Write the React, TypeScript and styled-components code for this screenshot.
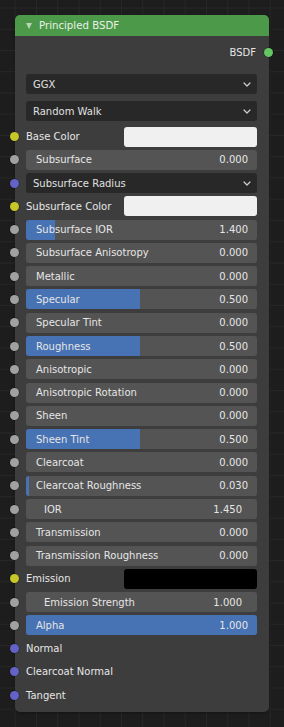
import React from "react";
import styled, { createGlobalStyle } from "styled-components";

const GlobalStyle = createGlobalStyle`
  html, body {
    margin: 0;
    padding: 0;
  }
  body {
    background-color: #1d1d1d;
    background-image:
      linear-gradient(to right, #272727 1px, transparent 1px),
      linear-gradient(to bottom, #272727 1px, transparent 1px);
    background-size: 21.25px 21.25px;
    background-position: 14.75px 7.5px;
    font-family: "DejaVu Sans", "Liberation Sans", sans-serif;
    color: #e6e6e6;
  }
`;

const Canvas = styled.div`
  min-height: 727px;
  padding: 15px 15px 0 15px;
  box-sizing: border-box;
`;

const Node = styled.div`
  width: 254px;
  border-radius: 5px;
  background: #3d3d3d;
  box-shadow: 0 1px 3px rgba(0, 0, 0, 0.35);
`;

const Header = styled.div`
  height: 21px;
  background: #4c9a49;
  border-radius: 5px 5px 0 0;
  display: flex;
  align-items: center;
  padding-left: 11px;
  gap: 7px;
  font-size: 10.2px;
  color: #e8f0e8;
`;

const Caret = styled.span`
  width: 0;
  height: 0;
  border-left: 3.5px solid transparent;
  border-right: 3.5px solid transparent;
  border-top: 6px solid #b8d4b6;
  margin-top: 1px;
`;

const Body = styled.div`
  padding: 6px 12px 6.5px 11px;
  display: flex;
  flex-direction: column;
`;

const OutputRow = styled.div`
  position: relative;
  height: 20px;
  display: flex;
  align-items: center;
  justify-content: flex-end;
  padding-right: 1px;
  font-size: 10px;
`;

const Socket = styled.span<{ $color: string; $side: "left" | "right" }>`
  position: absolute;
  top: 50%;
  ${(p) => (p.$side === "left" ? "left: -16px;" : "right: -16px;")}
  width: 9px;
  height: 9px;
  margin-top: -4.5px;
  border-radius: 50%;
  background: ${(p) => p.$color};
  box-shadow: 0 0 0 0.5px rgba(0, 0, 0, 0.45);
`;

const Dropdowns = styled.div`
  margin-top: 12px;
  display: flex;
  flex-direction: column;
  gap: 7px;
`;

const Dropdown = styled.div`
  position: relative;
  height: 20px;
  border-radius: 3px;
  background: #282828;
  display: flex;
  align-items: center;
  justify-content: space-between;
  padding: 0 6px 0 7px;
  font-size: 10px;
  color: #e0e0e0;
  flex: 1 0 auto;
  box-sizing: border-box;
`;

const Rows = styled.div`
  margin-top: 5.5px;
  display: flex;
  flex-direction: column;
  gap: 3.29px;
`;

const Row = styled.div`
  position: relative;
  height: 20px;
  display: flex;
  align-items: center;
  font-size: 10px;
`;

const Label = styled.span`
  color: #e6e6e6;
  white-space: nowrap;
`;

const ColorLabel = styled(Label)`
  width: 98px;
  flex: none;
`;

const Swatch = styled.div<{ $color: string }>`
  flex: 1;
  height: 20px;
  border-radius: 3px;
  background: ${(p) => p.$color};
`;

const Slider = styled.div<{ $number?: boolean }>`
  position: relative;
  flex: 1;
  height: 20px;
  border-radius: 3px;
  background: #545454;
  overflow: hidden;
  display: flex;
  align-items: center;
  justify-content: space-between;
  padding: ${(p) => (p.$number ? "0 15px 0 18px" : "0 9px 0 10px")};
  color: #e6e6e6;
`;

const Fill = styled.div`
  position: absolute;
  left: 0;
  top: 0;
  bottom: 0;
  background: #4772b3;
`;

const SliderText = styled.span`
  position: relative;
  white-space: nowrap;
`;

const Chevron = () => (
  <svg width="8" height="5" viewBox="0 0 8 5">
    <polyline
      points="1,1 4,4 7,1"
      fill="none"
      stroke="#d0d0d0"
      strokeWidth="1.2"
      strokeLinecap="round"
      strokeLinejoin="round"
    />
  </svg>
);

const YELLOW = "#c7c729";
const GREY = "#a1a1a1";
const PURPLE = "#6363c7";
const GREEN = "#63c763";

type Item =
  | { kind: "color"; label: string; color: string }
  | { kind: "slider"; label: string; value: string; fill: number }
  | { kind: "number"; label: string; value: string }
  | { kind: "menu"; label: string }
  | { kind: "vector"; label: string };

const items: Item[] = [
  { kind: "color", label: "Base Color", color: "#f0f0f0" },
  { kind: "slider", label: "Subsurface", value: "0.000", fill: 0 },
  { kind: "menu", label: "Subsurface Radius" },
  { kind: "color", label: "Subsurface Color", color: "#f0f0f0" },
  { kind: "slider", label: "Subsurface IOR", value: "1.400", fill: 12.6 },
  { kind: "slider", label: "Subsurface Anisotropy", value: "0.000", fill: 0 },
  { kind: "slider", label: "Metallic", value: "0.000", fill: 0 },
  { kind: "slider", label: "Specular", value: "0.500", fill: 49.4 },
  { kind: "slider", label: "Specular Tint", value: "0.000", fill: 0 },
  { kind: "slider", label: "Roughness", value: "0.500", fill: 49.4 },
  { kind: "slider", label: "Anisotropic", value: "0.000", fill: 0 },
  { kind: "slider", label: "Anisotropic Rotation", value: "0.000", fill: 0 },
  { kind: "slider", label: "Sheen", value: "0.000", fill: 0 },
  { kind: "slider", label: "Sheen Tint", value: "0.500", fill: 49.4 },
  { kind: "slider", label: "Clearcoat", value: "0.000", fill: 0 },
  { kind: "slider", label: "Clearcoat Roughness", value: "0.030", fill: 1.3 },
  { kind: "number", label: "IOR", value: "1.450" },
  { kind: "slider", label: "Transmission", value: "0.000", fill: 0 },
  { kind: "slider", label: "Transmission Roughness", value: "0.000", fill: 0 },
  { kind: "color", label: "Emission", color: "#000000" },
  { kind: "number", label: "Emission Strength", value: "1.000" },
  { kind: "slider", label: "Alpha", value: "1.000", fill: 100 },
  { kind: "vector", label: "Normal" },
  { kind: "vector", label: "Clearcoat Normal" },
  { kind: "vector", label: "Tangent" },
];

const socketColor = (it: Item) => {
  if (it.kind === "color") return YELLOW;
  if (it.kind === "vector" || it.kind === "menu") return PURPLE;
  return GREY;
};

const renderContent = (it: Item) => {
  switch (it.kind) {
    case "color":
      return (
        <>
          <ColorLabel>{it.label}</ColorLabel>
          <Swatch $color={it.color} />
        </>
      );
    case "slider":
      return (
        <Slider>
          {it.fill > 0 && <Fill style={{ width: `${it.fill}%` }} />}
          <SliderText>{it.label}</SliderText>
          <SliderText>{it.value}</SliderText>
        </Slider>
      );
    case "number":
      return (
        <Slider $number>
          <SliderText>{it.label}</SliderText>
          <SliderText>{it.value}</SliderText>
        </Slider>
      );
    case "menu":
      return (
        <Dropdown>
          <span>{it.label}</span>
          <Chevron />
        </Dropdown>
      );
    case "vector":
      return <Label>{it.label}</Label>;
  }
};

export default function App() {
  return (
    <>
      <GlobalStyle />
      <Canvas>
        <Node>
          <Header>
            <Caret />
            <span>Principled BSDF</span>
          </Header>
          <Body>
            <OutputRow>
              <span>BSDF</span>
              <Socket $color={GREEN} $side="right" />
            </OutputRow>
            <Dropdowns>
              <Dropdown>
                <span>GGX</span>
                <Chevron />
              </Dropdown>
              <Dropdown>
                <span>Random Walk</span>
                <Chevron />
              </Dropdown>
            </Dropdowns>
            <Rows>
              {items.map((it) => (
                <Row key={it.label}>
                  <Socket $color={socketColor(it)} $side="left" />
                  {renderContent(it)}
                </Row>
              ))}
            </Rows>
          </Body>
        </Node>
      </Canvas>
    </>
  );
}
